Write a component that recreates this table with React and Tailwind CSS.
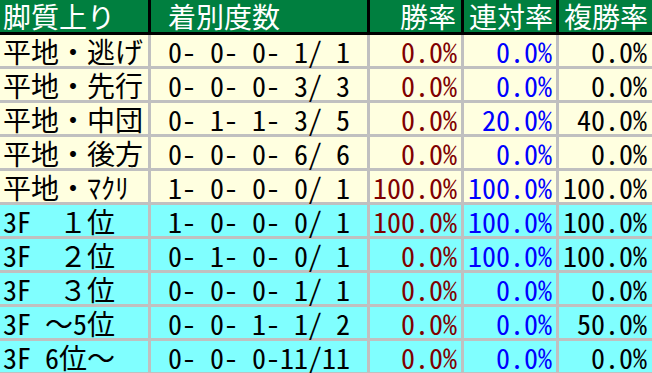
const rows = [
  { name: '平地・逃げ', rec: '0- 0- 0- 1/ 1', win: '0.0%', ren: '0.0%', fuku: '0.0%', bg: 'bg-[#ffffe0]' },
  { name: '平地・先行', rec: '0- 0- 0- 3/ 3', win: '0.0%', ren: '0.0%', fuku: '0.0%', bg: 'bg-[#ffffe0]' },
  { name: '平地・中団', rec: '0- 1- 1- 3/ 5', win: '0.0%', ren: '20.0%', fuku: '40.0%', bg: 'bg-[#ffffe0]' },
  { name: '平地・後方', rec: '0- 0- 0- 6/ 6', win: '0.0%', ren: '0.0%', fuku: '0.0%', bg: 'bg-[#ffffe0]' },
  { name: '平地・ﾏｸﾘ', rec: '1- 0- 0- 0/ 1', win: '100.0%', ren: '100.0%', fuku: '100.0%', bg: 'bg-[#ffffe0]' },
  { name: '3F　１位', rec: '1- 0- 0- 0/ 1', win: '100.0%', ren: '100.0%', fuku: '100.0%', bg: 'bg-[#80ffff]' },
  { name: '3F　２位', rec: '0- 1- 0- 0/ 1', win: '0.0%', ren: '100.0%', fuku: '100.0%', bg: 'bg-[#80ffff]' },
  { name: '3F　３位', rec: '0- 0- 0- 1/ 1', win: '0.0%', ren: '0.0%', fuku: '0.0%', bg: 'bg-[#80ffff]' },
  { name: '3F ～5位', rec: '0- 0- 1- 1/ 2', win: '0.0%', ren: '0.0%', fuku: '50.0%', bg: 'bg-[#80ffff]' },
  { name: '3F 6位～', rec: '0- 0- 0-11/11', win: '0.0%', ren: '0.0%', fuku: '0.0%', bg: 'bg-[#80ffff]' },
];

const cols = 'grid grid-cols-[148px_216px_91px_92px_1fr] gap-x-[3px]';

export default function App() {
  return (
    <div
      className="w-[652px] h-[373px] overflow-hidden bg-[#c0c0c0] text-[28px] leading-[30px] font-light whitespace-pre"
      style={{ fontFamily: '"Noto Sans Mono CJK JP", "Noto Sans CJK JP", monospace' }}
    >
      <div className={`${cols} bg-black border-b-[3px] border-black`}>
        <div className="h-[32px] bg-[#007f3f] text-white flex items-center pl-[3px]">脚質上り</div>
        <div className="h-[32px] bg-[#007f3f] text-white flex items-center pl-[17px]">着別度数</div>
        <div className="h-[32px] bg-[#007f3f] text-white flex items-center justify-end pr-[5px]">勝率</div>
        <div className="h-[32px] bg-[#007f3f] text-white flex items-center justify-end pr-[3px]">連対率</div>
        <div className="h-[32px] bg-[#007f3f] text-white flex items-center justify-end pr-[4px]">複勝率</div>
      </div>
      <div className="flex flex-col gap-y-[3px]">
        {rows.map((r) => (
          <div key={r.name} className={cols}>
            <div className={`h-[31px] ${r.bg} text-black flex items-center pl-[3px]`}>{r.name}</div>
            <div className={`h-[31px] ${r.bg} text-black flex items-center justify-center`}>{r.rec}</div>
            <div className={`h-[31px] ${r.bg} text-[#800000] flex items-center justify-end pr-[4px]`}>{r.win}</div>
            <div className={`h-[31px] ${r.bg} text-[#0000ff] flex items-center justify-end pr-[4px]`}>{r.ren}</div>
            <div className={`h-[31px] ${r.bg} text-black flex items-center justify-end pr-[5px]`}>{r.fuku}</div>
          </div>
        ))}
      </div>
    </div>
  );
}
